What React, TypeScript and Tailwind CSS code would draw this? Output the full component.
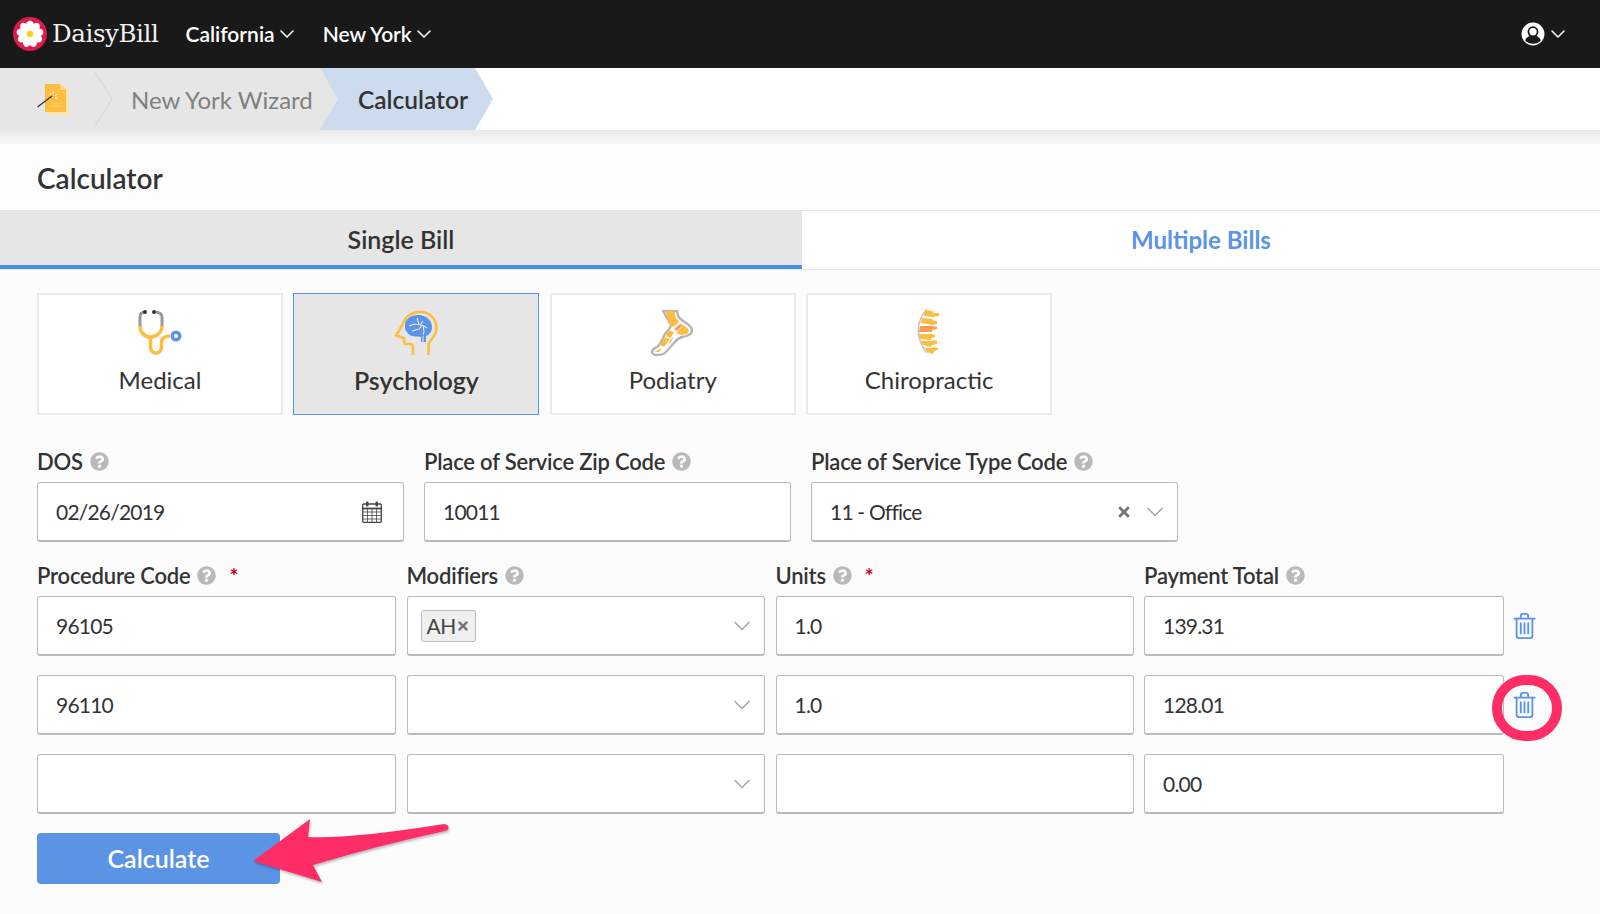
import { ChevronDown } from "lucide-react";
import { FaQuestionCircle, FaTimes } from "react-icons/fa";

const Help = () => <FaQuestionCircle className="ml-[7px] w-[19px] h-[19px] text-[#b9b9b9] shrink-0" />;

const Label = ({ text, required }: { text: string; required?: boolean }) => (
  <div className="flex items-center h-[24px] mb-[8px] -translate-y-[1px] text-[22px] font-semibold text-[#333] tracking-[-0.2px]">
    <span>{text}</span>
    <Help />
    {required && <span className="ml-[13px] text-[#d0021b] text-[21px] font-bold leading-none">*</span>}
  </div>
);

const Field = ({ value, className = "" }: { value: string; className?: string }) => (
  <input
    readOnly
    defaultValue={value}
    className={"w-full h-[60px] px-[18px] bg-white border border-[#bbb] border-b-2 rounded-[3px] text-[21px] tracking-[-0.8px] text-[#333] outline-none " + className}
  />
);

const SelectBox = ({ children }: { children?: React.ReactNode }) => (
  <div className="flex items-center h-[60px] pl-[13px] pr-[8px] bg-white border border-[#bbb] border-b-2 rounded-[3px]">
    <div className="flex-1 flex items-center">{children}</div>
    <ChevronDown className="w-[28px] h-[28px] text-[#aaa]" strokeWidth={1.5} />
  </div>
);

const Trash = () => (
  <svg viewBox="0 0 24 28" className="w-[23px] h-[26px]" fill="none" stroke="#5b94e5" strokeWidth="2" strokeLinejoin="round" strokeLinecap="round">
    <path d="M1 6h22M8 6V3.500C8 2 9 1 10.500 1h3C15 1 16 2 16 3.500V6" />
    <path d="M3.500 6v18.500c0 1.500 1 2.500 2.500 2.500h12c1.500 0 2.500-1 2.500-2.500V6" />
    <path d="M8 11v11M12 11v11M16 11v11" />
  </svg>
);

const Logo = () => (
  <svg viewBox="0 0 34 34" className="w-[34px] h-[34px] shrink-0">
    <circle cx="17" cy="17" r="17" fill="#e0194f" />
    {[0, 40, 80, 120, 160, 200, 240, 280, 320].map((a) => (
      <ellipse key={a} cx="17" cy="9.600" rx="4.200" ry="6.200" fill="#fff" transform={`rotate(${a} 17 17)`} />
    ))}
    <circle cx="17" cy="17" r="3.200" fill="#fcd116" />
  </svg>
);

const WizardIcon = () => (
  <svg viewBox="0 0 32 32" className="w-[32px] h-[32px] -translate-x-[1px]">
    <rect x="10" y="5" width="22" height="27" rx="1" fill="#fde3ad" />
    <path d="M8 1h15l6 6v22H8z" fill="#fdbd40" />
    <path d="M23 1l6 6h-6z" fill="#fdd58a" />
    <path d="M0.500 24L15 13" stroke="#333" strokeWidth="1.300" />
    <path d="M16 8v3M20 11l-2 2M21 15h-3M13 10l1 2" stroke="#fff" strokeWidth="1" />
    <path d="M14 20h11M14 23h11" stroke="#fcd27c" strokeWidth="0.800" />
  </svg>
);

const Stethoscope = () => (
  <svg viewBox="0 0 50 48" className="w-[50px] h-[48px]" fill="none" strokeLinecap="butt">
    <path d="M10 3C6 3 5 5 5 8v9M19 3c6 0 8 2 8 5v9" stroke="#999" strokeWidth="3" />
    <circle cx="10" cy="3" r="2" fill="#333" />
    <circle cx="19" cy="3" r="2" fill="#333" />
    <path d="M5 17c0 7 5 11 10.500 11S27 24 27 17" stroke="#fdbd40" strokeWidth="3.500" />
    <path d="M15.500 28v10c0 4 2.500 6 5.500 6s5.500-2 5.500-6v-5c0-3.500 3.500-6 8.500-6" stroke="#fdbd40" strokeWidth="3.500" />
    <circle cx="41" cy="27" r="5.500" fill="#5b94e5" />
    <circle cx="41" cy="27" r="2" fill="#fff" />
  </svg>
);

const Brain = () => (
  <svg viewBox="0 0 46 46" className="w-[46px] h-[46px]" fill="none">
    <path d="M20 45v-8q0-3-3-3h-4q-2 0-2-3v-3l-8-2.500L10 14C12 6 19 2 27 2c10 0 16.500 7 16.500 16 0 7-5.500 11-8 16v11" stroke="#fdbd40" strokeWidth="2.600" />
    <path d="M12 15C12 9 18 5 25 5c8 0 14 5 14 12 0 5-3 8-6 9v6h-5v-5c-3-1-6 0-8-1-3 0-5-2-6-4-2-1-2-4-2-7z" fill="#5b94e5" />
    <path d="M16 16l6-2 5 1 3-4M19 21l7-2 3-4 5 3M30 15l1 7-1 3M30 26v6M24 8l2 6" stroke="#e6e6e6" strokeWidth="1.100" />
  </svg>
);

const Foot = () => (
  <svg viewBox="0 0 46 46" className="w-[46px] h-[46px]" fill="none">
    <path d="M13 1l8 14c0 3-3 5-6 9-3 5-4 10-8 13-2 1-5 2-5 5 0 2 3 3 5 3 3 0 7-1 9-3l8-9c2-3 5-5 8-6 5-1 10-2 10-7 0-3-3-5-6-7-3-2-6-4-8-7l-1-5z" fill="#fff" stroke="#b5b5b5" strokeWidth="2.400" strokeLinejoin="round" />
    <path d="M15.500 1h9l1 6 3.500 5-6 5-4-3z" fill="#fdbd40" />
    <path d="M30 13l6 4c4 3 3 6 1 7l-6 1-5-2 6-6z" fill="#fdbd40" />
    <path d="M24 19l6-5 2 2-5 5z" fill="#fd9a55" />
    <path d="M18 20l6 2-3 6-5-2zM15 27l5 2-6 8-4-2zM20 30l4-3-6 9z" fill="#fdbd40" />
    <path d="M4 42l8-4-3 4z" fill="#fdbd40" />
  </svg>
);

const Spine = () => (
  <svg viewBox="0 2 28 48" className="w-[28px] h-[48px]" fill="none">
    <path d="M12 2C0 16 0 30 12 46" stroke="#c2c2c2" strokeWidth="1.500" />
    <path d="M10 3l7 1 2 2 5 0v3l-6 1-9-1z" fill="#fdbd40" />
    <path d="M7 11l10 1 2 2 3 0v3l-5 1-11-2z" fill="#fdbd40" />
    <path d="M5 19h12l5 1v2l-5 1v2H4z" fill="#fd9a55" />
    <path d="M4 27l13 0 3 1v2l-3 1-1 2-11-1z" fill="#fdbd40" />
    <path d="M6 34l11 0 2-1 3 1v3l-5 1-1 2-8-2z" fill="#fdbd40" />
    <path d="M10 41l7 0 2-1 4 1v2l-4 1-1 3-6-2z" fill="#fdbd40" />
  </svg>
);

const CalendarIcon = () => (
  <svg viewBox="0 0 20 22" className="w-[20px] h-[22px]" fill="none" stroke="#444">
    <rect x="0.700" y="3" width="18.600" height="18.300" rx="1" strokeWidth="1.300" />
    <path d="M1 7.500h18" strokeWidth="1.800" />
    <path d="M1 11h18M1 14.500h18M1 18h18M5.500 7.500v14M10 7.500v14M14.500 7.500v14" strokeWidth="0.800" />
    <rect x="4" y="0.500" width="2.500" height="5" rx="1" fill="#444" strokeWidth="0" />
    <rect x="13.500" y="0.500" width="2.500" height="5" rx="1" fill="#444" strokeWidth="0" />
  </svg>
);

const specialties = [
  { name: "Medical", icon: <Stethoscope /> },
  { name: "Psychology", icon: <Brain />, active: true },
  { name: "Podiatry", icon: <Foot /> },
  { name: "Chiropractic", icon: <Spine /> },
];

const rows = [
  { code: "96105", units: "1.0", total: "139.31", modifier: true, trash: true },
  { code: "96110", units: "1.0", total: "128.01", trash: true },
  { code: "", units: "", total: "0.00" },
];

const App = () => {
  return (
    <div className="relative w-full h-[914px] overflow-hidden bg-[#fcfcfc] font-[Lato,sans-serif] text-[#333]">
      <header className="h-[68px] bg-[#191919] flex items-center pl-[13px] pr-[30px] text-white">
        <Logo />
        <span className="ml-[5px] font-['DejaVu_Serif',serif] text-[24.500px] tracking-[-0.4px] text-[#f2f2f2]">DaisyBill</span>
        <nav className="ml-[27px] flex items-center gap-[24px] text-[21px] font-semibold">
          <span className="flex items-center">California<ChevronDown className="w-[24px] h-[24px]" strokeWidth={1.5} /></span>
          <span className="flex items-center">New York<ChevronDown className="w-[24px] h-[24px]" strokeWidth={1.5} /></span>
        </nav>
        <div className="ml-auto flex items-center gap-[1px]">
          <svg viewBox="0 0 22 22" className="w-[24px] h-[24px]">
            <circle cx="11" cy="11" r="10.500" fill="#fff" />
            <circle cx="11" cy="9" r="4.200" fill="none" stroke="#191919" strokeWidth="1.600" />
            <path d="M3.800 17c1-3 3-4 4.500-4.200h5.400c1.500.2 3.500 1.200 4.500 4.200-4 4-10.500 4-14.400 0z" fill="#191919" />
          </svg>
          <ChevronDown className="w-[24px] h-[24px]" strokeWidth={1.5} />
        </div>
      </header>

      <div className="h-[62px] bg-white flex border-b-0">
        <div className="relative z-10 w-[338px] h-full bg-[#e6e6e6] flex items-center [clip-path:polygon(0_0,320px_0,100%_50%,320px_100%,0_100%)]">
          <div className="w-[95px] flex justify-end pr-[25px]"><WizardIcon /></div>
          <svg viewBox="0 0 18 62" className="w-[18px] h-[62px] shrink-0" fill="none">
            <path d="M0 4l17 27L0 58" stroke="#d5d5d5" strokeWidth="1" />
          </svg>
          <span className="ml-[18px] text-[24px] text-[#7f7f7f] translate-y-[1px]">New York Wizard</span>
        </div>
        <div className="-ml-[18px] w-[173px] h-full bg-[#cddbee] flex items-center pl-[38px] [clip-path:polygon(0_0,155px_0,100%_50%,155px_100%,0_100%)]">
          <span className="text-[24.500px] font-semibold text-[#333] translate-y-[1px]">Calculator</span>
        </div>
      </div>
      <div className="h-[14px] bg-gradient-to-b from-[#e9e9e9] to-[#f7f7f7]" />

      <div className="h-[66px] bg-[#fdfdfd] flex items-center pl-[37px] pt-[2px] text-[28px] font-semibold text-[#333]">Calculator</div>

      <div className="flex h-[60px] border-t border-b border-[#e5e5e5]">
        <div className="w-[802px] pt-[4px] bg-[#e6e6e6] border-b-4 border-[#4a8fe7] flex items-center justify-center text-[25px] font-semibold text-[#333]">Single Bill</div>
        <div className="flex-1 bg-white flex items-center justify-center text-[24px] font-bold text-[#5b94e5]">Multiple Bills</div>
      </div>

      <main className="pl-[37px] pt-[23px]">
        <div className="flex gap-[10.400px]">
          {specialties.map((s) => (
            <div
              key={s.name}
              className={
                s.active
                  ? "w-[246px] h-[122px] bg-[#e6e6e6] border border-[#5b94e5] flex flex-col items-center pt-[15px]"
                  : "w-[246px] h-[122px] bg-white border-2 border-[#ebebeb] flex flex-col items-center pt-[14px]"
              }
            >
              <div className="h-[48px] flex items-center">{s.icon}</div>
              <div className={s.active ? "mt-[5px] text-[25px] font-semibold text-[#333]" : "mt-[5px] text-[24px] text-[#333]"}>{s.name}</div>
            </div>
          ))}
        </div>

        <div className="mt-[35px] flex gap-[20px]">
          <div className="w-[367px]">
            <Label text="DOS" />
            <div className="relative">
              <Field value="02/26/2019" />
              <div className="absolute right-[22px] top-[19px]"><CalendarIcon /></div>
            </div>
          </div>
          <div className="w-[367px]">
            <Label text="Place of Service Zip Code" />
            <Field value="10011" />
          </div>
          <div className="w-[367px]">
            <Label text="Place of Service Type Code" />
            <SelectBox>
              <span className="pl-[5px] text-[21px] tracking-[-0.8px] text-[#333]">11 - Office</span>
              <FaTimes className="ml-auto mr-[9px] w-[16px] h-[16px] text-[#777]" />
            </SelectBox>
          </div>
        </div>

        <div className="mt-[22px] grid grid-cols-[359px_358.500px_358px_360px] gap-x-[10.500px] w-[1467px]">
          <Label text="Procedure Code" required />
          <Label text="Modifiers" />
          <Label text="Units" required />
          <Label text="Payment Total" />
        </div>

        <div className="flex flex-col gap-[19px]">
          {rows.map((r, i) => (
            <div key={i} className="flex items-center">
              <div className="grid grid-cols-[359px_358.500px_358px_360px] gap-x-[10.500px] w-[1467px]">
                <Field value={r.code} />
                <SelectBox>
                  {r.modifier && (
                    <span className="flex items-center h-[32px] px-[5px] bg-[#f0f0f0] border border-[#bbb] rounded-[3px] text-[21px] tracking-[-0.5px] text-[#444]">
                      AH<FaTimes className="w-[14px] h-[14px] text-[#777]" />
                    </span>
                  )}
                </SelectBox>
                <Field value={r.units} />
                <Field value={r.total} />
              </div>
              {r.trash && <div className="ml-[9px]"><Trash /></div>}
            </div>
          ))}
        </div>

        <button className="mt-[19px] w-[243px] h-[51px] bg-[#5b94e5] rounded-[4px] text-white text-[25px] font-semibold">Calculate</button>
      </main>

      {/* annotation overlays */}
      <div className="absolute left-[1492px] top-[675px] w-[70px] h-[66px] rounded-full border-[10px] border-[#ff2d66]" />
      <svg viewBox="0 0 1600 914" className="absolute inset-0 w-[1600px] h-[914px] pointer-events-none">
        <path
          d="M253 861L310 819L308 837Q350 839 444 824Q450 825 448 829Q448 830 445 831Q380 845 313 865L322 882Z"
          fill="#ff2d66"
          style={{ filter: "drop-shadow(1px 2px 1px rgba(0,0,0,0.25))" }}
        />
      </svg>
    </div>
  );
};

export default App;
